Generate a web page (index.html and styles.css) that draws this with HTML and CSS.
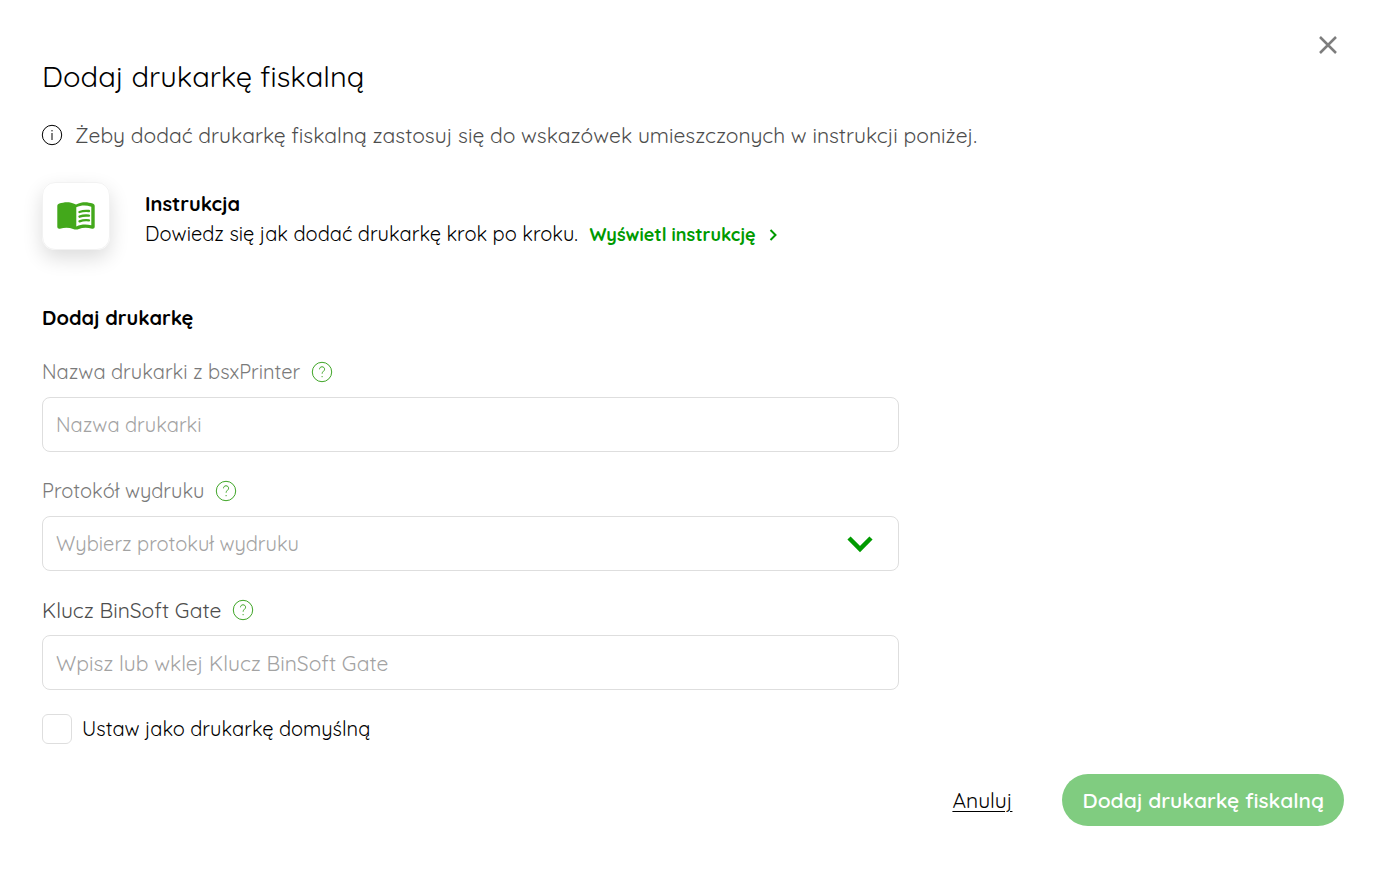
FILE: index.html
```html
<!DOCTYPE html>
<html lang="pl">
<head>
    <meta charset="UTF-8">
    <meta name="viewport" content="width=device-width, initial-scale=1.0">
    <title>Dodaj drukarkę fiskalną</title>
    <link rel="stylesheet" href="styles.css">
</head>
<body>

<main class="dialog">
    <button type="button" class="close" aria-label="Zamknij">
        <svg width="20" height="20" viewBox="0 0 20 20"><path d="M2 2l16 16M18 2L2 18"/></svg>
    </button>

    <h1>Dodaj drukarkę fiskalną</h1>

    <p class="info">
        <svg width="22" height="22" viewBox="0 0 22 22"><circle cx="11" cy="11" r="9.7"/><path d="M11 9v7M11 6v1.4"/></svg>
        <span>Żeby dodać drukarkę fiskalną zastosuj się do wskazówek umieszczonych w instrukcji poniżej.</span>
    </p>

    <section class="guide">
        <div class="guide-icon">
            <svg width="38" height="28" viewBox="0 0 38 28">
                <path fill="#43a81b" d="M19 2.600C15.500.7 12.500.3 10 .3 7.300.3 4.600.9 2.300 1.500.9 1.900.3 2.800.3 4V24.800c0 1.500 1.200 2.300 2.600 1.900 5.300-1.300 9.600-1 13.200.3 1.900.8 3.900.8 5.800 0 3.600-1.300 7.900-1.600 13.200-.3 1.400.4 2.600-.4 2.600-1.900V4c0-1.200-.6-2.100-2-2.500C33.400.9 30.700.3 28 .3c-2.500 0-5.500.4-9 2.300z"/>
                <path fill="#fff" d="M19.300 5.300c4.500-2.200 9.500-2.500 15-.6v18.500c-5.500-1.200-10.500-.9-15 1.300z"/>
                <path class="lines" d="M22.500 10q4.500-1.700 9.500-1M22.500 14.700q4.500-1.700 9.500-1M22.500 19.400q4.500-1.700 9.500-1"/>
            </svg>
        </div>
        <div class="guide-text">
            <h2>Instrukcja</h2>
            <p>Dowiedz się jak dodać drukarkę krok po kroku.
                <a href="#">Wyświetl instrukcję
                    <svg width="8" height="14" viewBox="0 0 8 14"><path d="M1.500 2l5 5-5 5"/></svg>
                </a>
            </p>
        </div>
    </section>

    <form>
        <h2>Dodaj drukarkę</h2>

        <div class="field">
            <div class="label">
                <label for="name">Nazwa drukarki z bsxPrinter</label>
                <button type="button" class="help" aria-label="Pomoc: nazwa drukarki">
                    <svg width="22" height="22" viewBox="0 0 22 22"><circle cx="11" cy="11" r="9.700"/><path d="M8.500 8.300c0-1.500 1-2.500 2.500-2.500s2.600 1 2.600 2.400c0 2-2.500 2.200-2.500 4.500M11.100 15v1.200"/></svg>
                </button>
            </div>
            <input type="text" id="name" class="control" placeholder="Nazwa drukarki">
        </div>

        <div class="field">
            <div class="label">
                <label for="protocol">Protokół wydruku</label>
                <button type="button" class="help" aria-label="Pomoc: protokół wydruku">
                    <svg width="22" height="22" viewBox="0 0 22 22"><circle cx="11" cy="11" r="9.700"/><path d="M8.500 8.300c0-1.500 1-2.500 2.500-2.500s2.600 1 2.600 2.400c0 2-2.500 2.200-2.500 4.500M11.100 15v1.200"/></svg>
                </button>
            </div>
            <div class="select">
                <select id="protocol" class="control">
                    <option value="">Wybierz protokuł wydruku</option>
                </select>
                <svg width="26" height="18" viewBox="0 0 26 18"><path d="M2 3l11 11L24 3"/></svg>
            </div>
        </div>

        <div class="field">
            <div class="label wide">
                <label for="key">Klucz BinSoft Gate</label>
                <button type="button" class="help" aria-label="Pomoc: klucz BinSoft Gate">
                    <svg width="22" height="22" viewBox="0 0 22 22"><circle cx="11" cy="11" r="9.700"/><path d="M8.500 8.300c0-1.500 1-2.500 2.500-2.500s2.600 1 2.600 2.400c0 2-2.500 2.200-2.500 4.500M11.100 15v1.200"/></svg>
                </button>
            </div>
            <input type="text" id="key" class="control wide" placeholder="Wpisz lub wklej Klucz BinSoft Gate">
        </div>

        <div class="check">
            <input type="checkbox" id="default">
            <label for="default">Ustaw jako drukarkę domyślną</label>
        </div>

        <div class="actions">
            <a href="#">Anuluj</a>
            <button type="submit" class="submit">Dodaj drukarkę fiskalną</button>
        </div>
    </form>
</main>

</body>
</html>
```
FILE: styles.css
```css
* {
    box-sizing: border-box;
}
body {
    margin: 0;
    background: #fff;
    color: #000;
    font-family: Quicksand, Lato, sans-serif;
    font-size: 20px;
    font-weight: 400;
    line-height: 30px;
}
h1, h2, p {
    margin: 0;
}
button, input, select {
    font: inherit;
}
svg {
    fill: none;
    flex-shrink: 0;
}
.dialog {
    position: relative;
    padding: 56px 43px 40px 42px;
}
.close {
    position: absolute;
    top: 35px;
    right: 49px;
    display: flex;
    padding: 0;
    border: 0;
    background: none;
    cursor: pointer;
}
.close svg {
    stroke: #7d7d7d;
    stroke-width: 2.5;
}
h1 {
    font-size: 29px;
    font-weight: 400;
    line-height: 40px;
}
h2 {
    font-size: 20px;
    font-weight: 700;
}
.info {
    display: flex;
    align-items: center;
    gap: 12px;
    margin-top: 24px;
    color: #4d4d4d;
    font-size: 21px;
}
.info svg {
    margin-left: -1px;
    stroke: #000;
    stroke-width: 1;
}
.guide {
    display: flex;
    align-items: center;
    gap: 35px;
    margin-top: 32px;
}
.guide-icon {
    display: flex;
    align-items: center;
    justify-content: center;
    width: 68px;
    height: 68px;
    border: 1px solid #f2f2f2;
    border-radius: 13px;
    box-shadow: 0 8px 20px rgba(0, 0, 0, 0.14);
}
.guide-text {
    padding-top: 6px;
}
.guide-icon .lines {
    stroke: #43a81b;
    stroke-width: 2.3;
    stroke-linecap: round;
}
.guide a {
    margin-left: 6px;
    color: #009a00;
    font-size: 18px;
    font-weight: 700;
    text-decoration: none;
}
.guide a svg {
    margin-left: 8px;
    vertical-align: -1px;
    stroke: #009a00;
    stroke-width: 2;
}
form {
    margin-top: 53px;
}
.field {
    max-width: 857px;
    margin-top: 27px;
}
.label {
    display: flex;
    align-items: center;
    gap: 11px;
    height: 24px;
    margin-bottom: 13px;
    color: #7a7a7a;
}
.label.wide {
    color: #4d4d4d;
}
.wide {
    font-size: 21px;
}
.help {
    display: flex;
    padding: 0;
    border: 0;
    background: none;
    cursor: pointer;
}
.help svg {
    stroke: #3fa527;
    stroke-width: 1;
}
.control {
    display: block;
    width: 100%;
    height: 55px;
    padding: 0 13px;
    border: 1px solid #dedede;
    border-radius: 8px;
    background: #fff;
    color: #a3a3a3;
}
.control::placeholder {
    color: #a3a3a3;
    opacity: 1;
}
select.control {
    appearance: none;
}
.select {
    position: relative;
}
.select svg {
    position: absolute;
    top: 19px;
    right: 26px;
    stroke: #009a00;
    stroke-width: 4.5;
    pointer-events: none;
}
.check {
    display: flex;
    align-items: center;
    gap: 10px;
    margin-top: 24px;
}
.check input {
    appearance: none;
    width: 30px;
    height: 30px;
    margin: 0;
    border: 1px solid #dedede;
    border-radius: 6px;
}
.check input:checked {
    background: #009a00;
}
.actions {
    display: flex;
    align-items: center;
    justify-content: flex-end;
    gap: 50px;
    margin-top: 30px;
}
.actions a {
    color: #000;
    font-size: 21px;
    text-decoration-thickness: 1px;
    text-underline-offset: 3px;
}
.submit {
    height: 52px;
    padding: 0 20px;
    border: 0;
    border-radius: 26px;
    background: #80cc80;
    color: #fff;
    font-size: 21px;
    font-weight: 600;
    cursor: pointer;
}
```
